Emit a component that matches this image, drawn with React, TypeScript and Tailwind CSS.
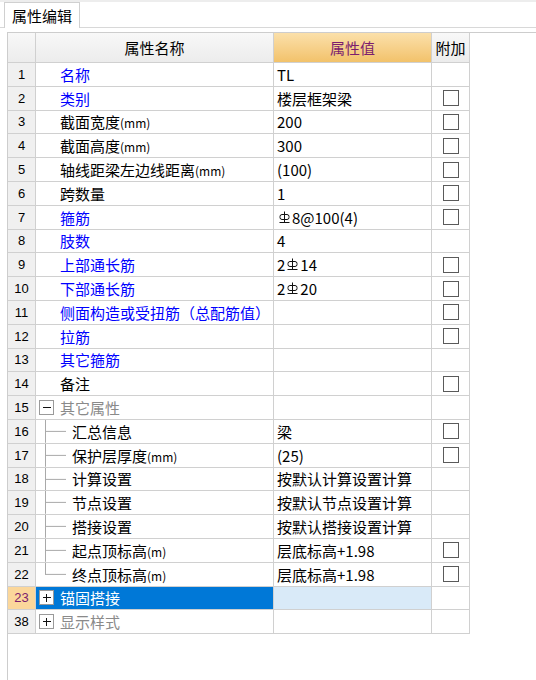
import React from 'react';

type Tone = 'blue' | 'black' | 'gray';
type Tree = 'none' | 'open' | 'closed' | 'branch' | 'last';

interface PropRow {
  n: number;
  name: string;
  unit?: string;
  tone: Tone;
  value: string;
  check: boolean;
  tree: Tree;
  selected?: boolean;
}

// '#' in a value stands for the HRB400 rebar symbol
const ROWS: PropRow[] = [
  { n: 1, name: '名称', tone: 'blue', value: 'TL', check: false, tree: 'none' },
  { n: 2, name: '类别', tone: 'blue', value: '楼层框架梁', check: true, tree: 'none' },
  { n: 3, name: '截面宽度', unit: '(mm)', tone: 'black', value: '200', check: true, tree: 'none' },
  { n: 4, name: '截面高度', unit: '(mm)', tone: 'black', value: '300', check: true, tree: 'none' },
  { n: 5, name: '轴线距梁左边线距离', unit: '(mm)', tone: 'black', value: '(100)', check: true, tree: 'none' },
  { n: 6, name: '跨数量', tone: 'black', value: '1', check: true, tree: 'none' },
  { n: 7, name: '箍筋', tone: 'blue', value: '#8@100(4)', check: true, tree: 'none' },
  { n: 8, name: '肢数', tone: 'blue', value: '4', check: false, tree: 'none' },
  { n: 9, name: '上部通长筋', tone: 'blue', value: '2#14', check: true, tree: 'none' },
  { n: 10, name: '下部通长筋', tone: 'blue', value: '2#20', check: true, tree: 'none' },
  { n: 11, name: '侧面构造或受扭筋（总配筋值）', tone: 'blue', value: '', check: true, tree: 'none' },
  { n: 12, name: '拉筋', tone: 'blue', value: '', check: true, tree: 'none' },
  { n: 13, name: '其它箍筋', tone: 'blue', value: '', check: false, tree: 'none' },
  { n: 14, name: '备注', tone: 'black', value: '', check: true, tree: 'none' },
  { n: 15, name: '其它属性', tone: 'gray', value: '', check: false, tree: 'open' },
  { n: 16, name: '汇总信息', tone: 'black', value: '梁', check: true, tree: 'branch' },
  { n: 17, name: '保护层厚度', unit: '(mm)', tone: 'black', value: '(25)', check: true, tree: 'branch' },
  { n: 18, name: '计算设置', tone: 'black', value: '按默认计算设置计算', check: false, tree: 'branch' },
  { n: 19, name: '节点设置', tone: 'black', value: '按默认节点设置计算', check: false, tree: 'branch' },
  { n: 20, name: '搭接设置', tone: 'black', value: '按默认搭接设置计算', check: false, tree: 'branch' },
  { n: 21, name: '起点顶标高', unit: '(m)', tone: 'black', value: '层底标高+1.98', check: true, tree: 'branch' },
  { n: 22, name: '终点顶标高', unit: '(m)', tone: 'black', value: '层底标高+1.98', check: true, tree: 'last' },
  { n: 23, name: '锚固搭接', tone: 'black', value: '', check: false, tree: 'closed', selected: true },
  { n: 38, name: '显示样式', tone: 'gray', value: '', check: false, tree: 'closed' },
];

const TONE_CLASS: Record<Tone, string> = {
  blue: 'text-[#0000ff]',
  black: 'text-black',
  gray: 'text-[#8a8a8a]',
};

function RebarSymbol() {
  return (
    <svg width="11" height="13" viewBox="0 0 11 13" className="mx-[2px] inline-block align-[-2px]">
      <path d="M5.5 0.5V11 M0.5 11.5H10.5" stroke="#111" strokeWidth="1" fill="none" />
      <rect x="1" y="3.5" width="9" height="5" rx="2" fill="none" stroke="#111" strokeWidth="1" />
    </svg>
  );
}

function Checkbox() {
  return <span className="block h-[16px] w-[16px] border border-[#5a5a5a] bg-white" />;
}

function ExpandBox({ open }: { open: boolean }) {
  return (
    <svg width="15" height="15" viewBox="0 0 15 15" className="ml-[3px] shrink-0" shapeRendering="crispEdges">
      <rect x="0.5" y="0.5" width="14" height="14" fill="#fff" stroke="#9a9a9a" />
      <path d="M3.5 7.5H11.5" stroke="#111" strokeWidth="1.5" />
      {!open && <path d="M7.5 3.5V11.5" stroke="#111" strokeWidth="1.5" />}
    </svg>
  );
}

function TreeLines({ last }: { last: boolean }) {
  return (
    <svg width="36" height="23" viewBox="0 0 36 23" preserveAspectRatio="none" className="h-full shrink-0" shapeRendering="crispEdges">
      <path d={last ? 'M9.5 0V12' : 'M9.5 0V23'} stroke="#a8a8a8" />
      <path d="M9.5 11.5H30" stroke="#a8a8a8" />
    </svg>
  );
}

function Value({ text }: { text: string }) {
  const parts = text.split('#');
  return (
    <>
      {parts.map((p, i) => (
        <React.Fragment key={i}>
          {i > 0 && <RebarSymbol />}
          {p}
        </React.Fragment>
      ))}
    </>
  );
}

function NameCell({ row }: { row: PropRow }) {
  const color = row.selected ? 'text-white' : TONE_CLASS[row.tone];
  const label = (
    <span className={`${color} whitespace-nowrap`}>
      {row.name}
      {row.unit && <span className="text-[12px]">{row.unit}</span>}
    </span>
  );

  if (row.tree === 'open' || row.tree === 'closed') {
    return (
      <div className="flex h-full items-center gap-[6px]">
        <ExpandBox open={row.tree === 'open'} />
        {label}
      </div>
    );
  }
  if (row.tree === 'branch' || row.tree === 'last') {
    return (
      <div className="flex h-full items-center">
        <TreeLines last={row.tree === 'last'} />
        {label}
      </div>
    );
  }
  return <div className="flex h-full items-center pl-[24px]">{label}</div>;
}

export default function App() {
  return (
    <div
      className="flex h-[680px] w-[536px] flex-col overflow-hidden bg-white text-[15px] leading-none text-black"
      style={{ fontFamily: '"Noto Sans CJK SC", "Noto Sans", sans-serif' }}
    >
      <div className="h-[2px] bg-[#ededed]" />
      <div className="flex h-[26px] border-b border-[#d8d8d8] pl-[4px]">
        <div className="-mb-px flex items-center border border-b-0 border-[#d0d0d0] bg-white px-[7px] pb-[1px]">
          属性编辑
        </div>
      </div>
      <div className="h-[4px]" />
      <div className="ml-[7px] flex-1 border-l border-t border-[#cdcdcd]">
        <div className="grid h-[30px] w-[462px] grid-cols-[28px_238px_158px_38px]">
          <div className="border-r border-b border-[#d0d0d0] bg-linear-to-b from-[#f8f8f8] to-[#ececec]" />
          <div className="flex items-center justify-center border-r border-b border-[#d0d0d0] bg-linear-to-b from-[#f8f8f8] to-[#ececec]">
            属性名称
          </div>
          <div className="flex items-center justify-center border-r border-b border-[#d0d0d0] bg-linear-to-b from-[#fbe0aa] to-[#f2c26a] text-[#7c1d6e]">
            属性值
          </div>
          <div className="flex items-center justify-center border-r border-b border-[#d0d0d0] bg-linear-to-b from-[#f8f8f8] to-[#ececec]">
            附加
          </div>
        </div>

        {ROWS.map((row) => (
          <div key={row.n} className="grid h-[23.8px] w-[462px] grid-cols-[28px_238px_158px_38px]">
            <div
              className={`flex items-center justify-center border-r border-b border-[#d0d0d0] text-[13px] ${
                row.selected ? 'bg-[#fbd79b] text-[#7c1d6e]' : 'bg-[#f0f0f0]'
              }`}
              style={{ fontFamily: '"Liberation Sans", sans-serif' }}
            >
              {row.n}
            </div>
            <div className={`overflow-hidden border-r border-b border-[#d0d0d0] ${row.selected ? 'bg-[#0078d7]' : ''}`}>
              <NameCell row={row} />
            </div>
            <div
              className={`flex items-center overflow-hidden whitespace-nowrap border-r border-b border-[#d0d0d0] pl-[3px] ${
                row.selected ? 'bg-[#d9eaf8]' : ''
              }`}
            >
              <Value text={row.value} />
            </div>
            <div className="flex items-center justify-center border-r border-b border-[#d0d0d0]">
              {row.check && <Checkbox />}
            </div>
          </div>
        ))}
      </div>
    </div>
  );
}
